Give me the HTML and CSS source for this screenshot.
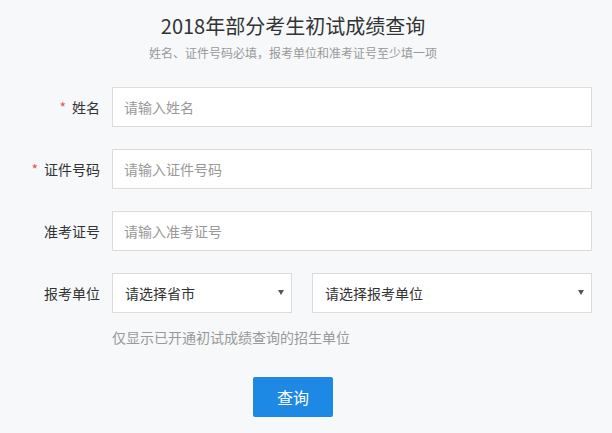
FILE: index.html
```html
<!DOCTYPE html>
<html lang="zh-CN">
<head>
    <meta charset="UTF-8">
    <meta name="viewport" content="width=device-width, initial-scale=1.0">
    <title>2018年部分考生初试成绩查询</title>
    <link rel="stylesheet" href="styles.css">
</head>
<body>
    <div class="page">
        <div class="header">
            <h1>2018年部分考生初试成绩查询</h1>
            <p class="subtitle">姓名、证件号码必填，报考单位和准考证号至少填一项</p>
        </div>

        <form class="query-form">
            <div class="form-row">
                <label class="form-label"><span class="required">*</span>姓名</label>
                <input type="text" class="form-input" placeholder="请输入姓名">
            </div>
            <div class="form-row">
                <label class="form-label"><span class="required">*</span>证件号码</label>
                <input type="text" class="form-input" placeholder="请输入证件号码">
            </div>
            <div class="form-row">
                <label class="form-label">准考证号</label>
                <input type="text" class="form-input" placeholder="请输入准考证号">
            </div>
            <div class="form-row">
                <label class="form-label">报考单位</label>
                <div class="select-box select-province">
                    <select class="form-select">
                        <option>请选择省市</option>
                    </select>
                </div>
                <div class="select-box select-unit">
                    <select class="form-select">
                        <option>请选择报考单位</option>
                    </select>
                </div>
            </div>
            <p class="hint">仅显示已开通初试成绩查询的招生单位</p>

            <div class="actions">
                <button type="button" class="btn-query">查询</button>
            </div>
        </form>
    </div>
</body>
</html>
```

FILE: styles.css
```css
* {
    box-sizing: border-box;
    margin: 0;
    padding: 0;
    font-family: "Microsoft YaHei", "Noto Sans CJK SC", sans-serif;
}

body {
    background: #f6f8fa;
    color: #333;
}

.page {
    width: 612px;
    padding-right: 26px;
}

.header {
    padding-top: 12px;
    text-align: center;
}

h1 {
    font-size: 20px;
    line-height: 28px;
    font-weight: normal;
    color: #333;
}

.subtitle {
    margin-top: 4px;
    font-size: 12px;
    line-height: 18px;
    color: #999;
}

.query-form {
    margin-top: 25px;
}

.form-row {
    display: flex;
    align-items: center;
    height: 40px;
    margin-bottom: 22px;
}

.form-label {
    width: 100px;
    margin-right: 12px;
    flex-shrink: 0;
    text-align: right;
    font-size: 14px;
    color: #333;
}

.required {
    color: #e0585b;
    margin-right: 6px;
}

.form-input {
    width: 480px;
    height: 40px;
    flex-shrink: 0;
    padding: 0 11px;
    border: 1px solid #dcdcdc;
    background: #fff;
    font-size: 14px;
    color: #333;
    outline: none;
}

.form-input::placeholder {
    color: #999;
}

.select-box {
    position: relative;
    height: 40px;
    flex-shrink: 0;
}

.select-province {
    width: 180px;
    margin-right: 20px;
}

.select-unit {
    width: 280px;
}

.select-box::after {
    content: "";
    position: absolute;
    right: 8px;
    top: 17px;
    border-left: 3px solid transparent;
    border-right: 3px solid transparent;
    border-top: 5px solid #555;
    pointer-events: none;
}

.form-select {
    width: 100%;
    height: 40px;
    padding: 0 12px;
    border: 1px solid #dcdcdc;
    border-radius: 0;
    background: #fff;
    font-size: 14px;
    color: #333;
    appearance: none;
    -webkit-appearance: none;
    outline: none;
}

.hint {
    margin-top: -8px;
    margin-left: 112px;
    font-size: 14px;
    line-height: 20px;
    color: #999;
}

.actions {
    margin-top: 30px;
    text-align: center;
}

.btn-query {
    width: 80px;
    height: 40px;
    border: none;
    border-radius: 2px;
    background: #1e88e5;
    color: #fff;
    font-size: 16px;
    cursor: pointer;
}
```
